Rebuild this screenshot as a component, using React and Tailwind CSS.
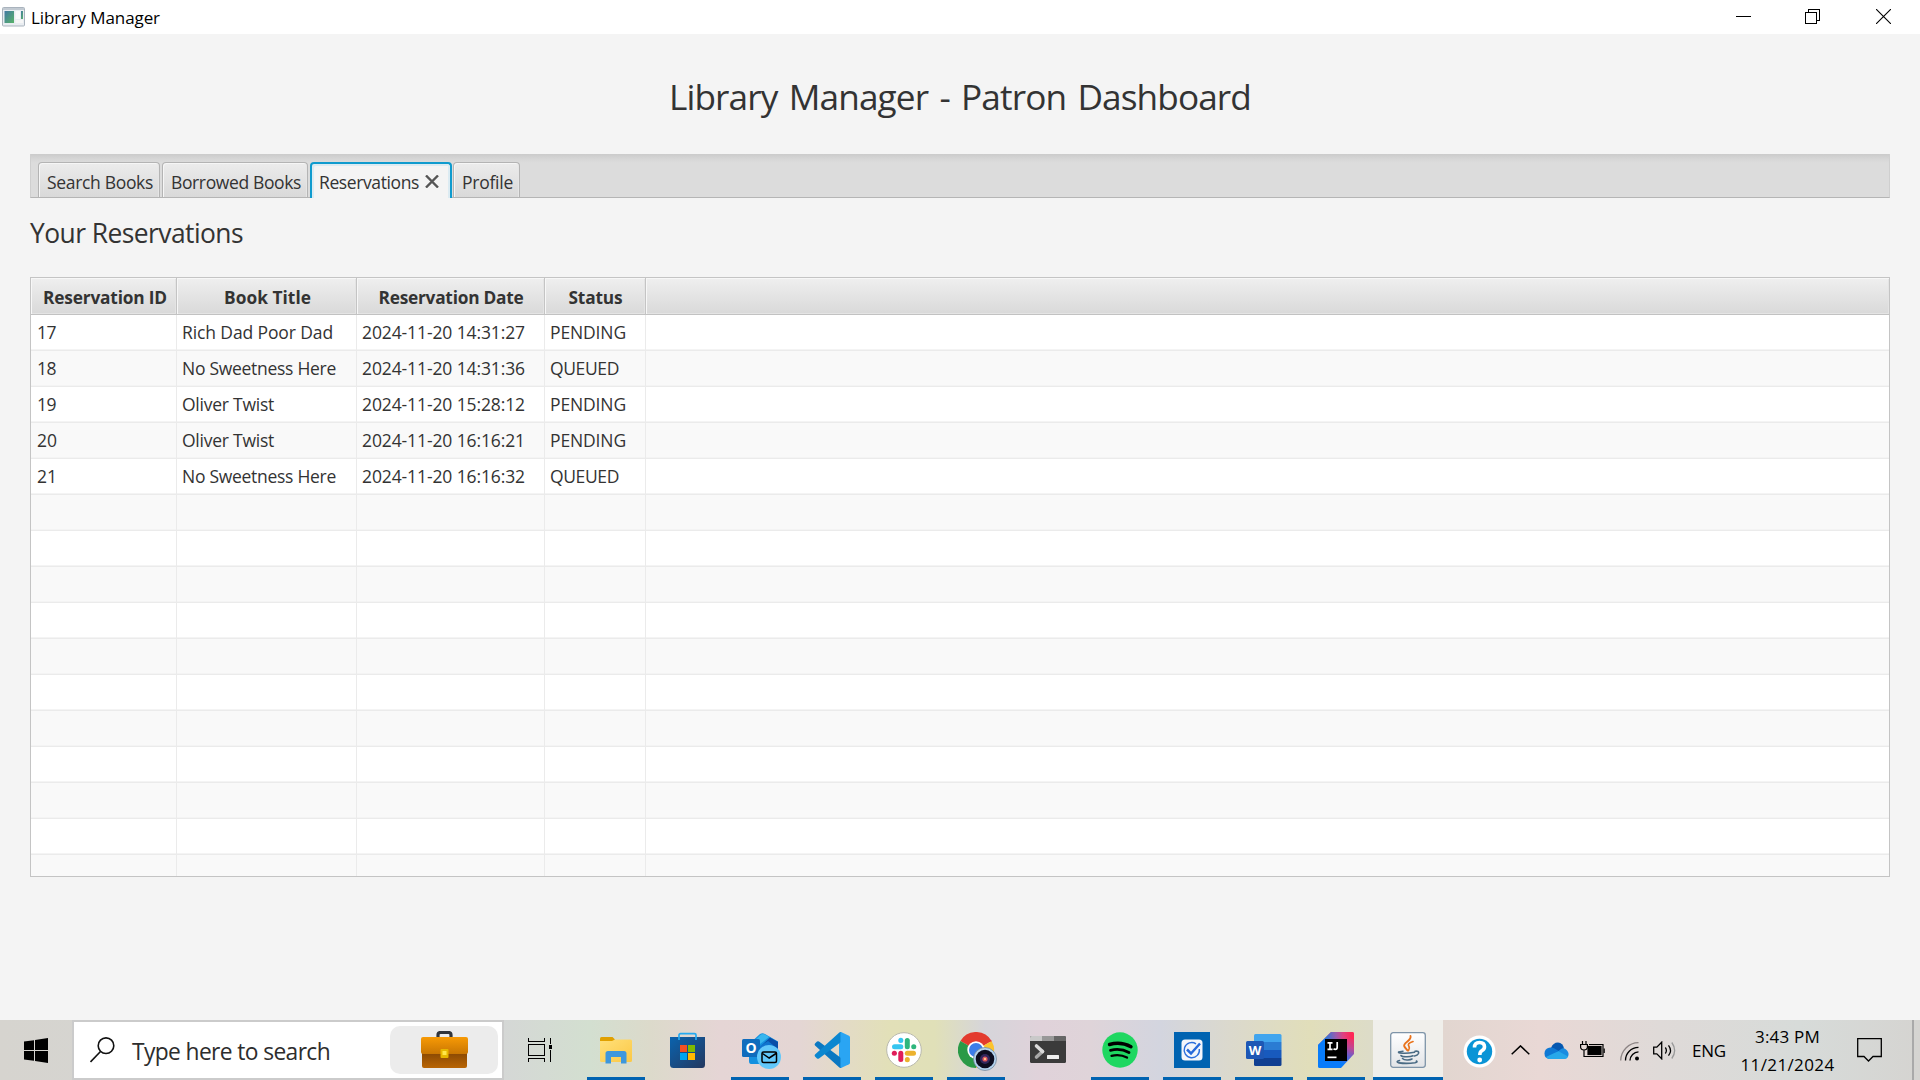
import React, { useLayoutEffect, useRef } from "react";

/* Single line of text whose tracking is adjusted so that it spans `w` pixels. */
function Fit({ w, className = "", children }) {
  const ref = useRef(null);
  useLayoutEffect(() => {
    const el = ref.current;
    el.style.letterSpacing = "0px";
    const natural = el.getBoundingClientRect().width;
    el.style.letterSpacing = `${(w - natural) / children.length}px`;
  }, [w, children]);
  return (
    <span ref={ref} className={`inline-block whitespace-pre ${className}`}>
      {children}
    </span>
  );
}

const reservations = [
  ["17", 19, "Rich Dad Poor Dad", 151, "2024-11-20 14:31:27", 163, "PENDING", 76],
  ["18", 19, "No Sweetness Here", 154, "2024-11-20 14:31:36", 163, "QUEUED", 69],
  ["19", 19, "Oliver Twist", 92, "2024-11-20 15:28:12", 163, "PENDING", 76],
  ["20", 20, "Oliver Twist", 92, "2024-11-20 16:16:21", 163, "PENDING", 76],
  ["21", 20, "No Sweetness Here", 154, "2024-11-20 16:16:32", 163, "QUEUED", 69],
];

const cols = "grid grid-cols-[146px_180px_188px_101px_1fr]";

function TitleBar() {
  return (
    <div className="flex h-[34px] items-center bg-white text-black">
      <svg className="ml-[2px] -mt-[1px] h-[20px] w-[23px]" viewBox="0 0 23 20">
        <defs>
          <linearGradient id="appA" x1="0" y1="0" x2="1" y2="1">
            <stop offset="0" stopColor="#4279a3" />
            <stop offset="1" stopColor="#58b368" />
          </linearGradient>
        </defs>
        <rect x="0.5" y="0.5" width="22" height="18.5" rx="1" fill="#e9edf1" stroke="#a9b3bd" />
        <rect x="1" y="1" width="21" height="2" fill="#c2cad2" />
        <rect x="2.5" y="4" width="9.5" height="12" fill="url(#appA)" />
        <rect x="13.5" y="4" width="4.5" height="8" fill="#fafafa" />
        <rect x="19" y="4" width="2" height="8" fill="url(#appA)" />
        <rect x="13.5" y="13" width="7.5" height="3" fill="#f6f6f6" />
      </svg>
      <Fit w={129} className="ml-[6px] pt-[2px] text-[17px] leading-[34px]">Library Manager</Fit>
      <div className="-mt-[1px] ml-auto flex items-center pr-[29px]">
        <svg className="h-[15px] w-[15px]" viewBox="0 0 15 15" shapeRendering="crispEdges">
          <rect y="7" width="15" height="1" />
        </svg>
        <svg className="ml-[54px] h-[15px] w-[15px]" viewBox="0 0 15 15" fill="none" stroke="#000" shapeRendering="crispEdges">
          <path d="M0.5 3.5h11v11h-11z M3.5 3V.5h11v11H12" />
        </svg>
        <svg className="ml-[56px] h-[15px] w-[15px]" viewBox="0 0 15 15" fill="none" stroke="#000" strokeWidth="1.1">
          <path d="M0 0L15 15M15 0L0 15" />
        </svg>
      </div>
    </div>
  );
}

function Tab({ label, w, className, active }) {
  const look = active
    ? "border-2 border-b-0 border-[#0f9bce] bg-[#f4f4f4] shadow-[inset_2px_2px_0_#dcebf2,inset_-2px_0_0_#dcebf2] h-[36px]"
    : "border border-b-0 border-[#b4b4b4] bg-linear-to-b from-[#ececec] to-[#d9d9d9] shadow-[inset_1px_1px_0_#f6f6f6,inset_-1px_0_0_#e6e6e6] h-[35px] pt-[3px]";
  return (
    <div className={`flex items-center rounded-t-[4px] ${look} ${className}`}>
      <Fit w={w} className="text-[17.5px] leading-[36px]">{label}</Fit>
      {active && (
        <svg className="-mt-[1px] ml-[6px] h-[13px] w-[14px]" viewBox="0 0 14 13" fill="none" stroke="#555" strokeWidth="2.4">
          <path d="M1 0.5L13 12.5M13 0.5L1 12.5" />
        </svg>
      )}
    </div>
  );
}

function Tabs() {
  return (
    <div className="flex h-[44px] items-start border-b border-x border-b-[#b5b5b5] border-x-[#cfcfcf] bg-[linear-gradient(#cbcbcb,#d6d6d6_5px,#dcdcdc_9px,#dcdcdc)] pt-[8px] pl-[7px]">
      <Tab label="Search Books" w={106} className="w-[122px] pl-[8px]" />
      <Tab label="Borrowed Books" w={130} className="ml-[2px] w-[146px] pl-[8px]" />
      <Tab label="Reservations" w={100} className="ml-[2px] w-[142px] pl-[7px] pt-[1px]" active />
      <Tab label="Profile" w={51} className="ml-[1px] w-[67px] pl-[8px]" />
    </div>
  );
}

function HeaderCell({ children, w, className = "" }) {
  return (
    <div className={`flex items-center justify-center border-r border-b border-r-[#c4c4c4] border-b-[#c2c2c2] bg-linear-to-b from-[#efefef] to-[#d9d9d9] pt-[3px] text-[17.3px] font-bold shadow-[inset_1px_1px_0_#f7f7f7,inset_-1px_-1px_0_#e4e4e4] ${className}`}>
      {children && <Fit w={w}>{children}</Fit>}
    </div>
  );
}

function Table() {
  return (
    <div className="flex h-[600px] flex-col overflow-hidden border border-[#c4c4c4]">
      <div className={`${cols} h-[37px] shrink-0`}>
        <HeaderCell w={124} className="pl-[3px]">Reservation ID</HeaderCell>
        <HeaderCell w={87} className="pl-[2px]">Book Title</HeaderCell>
        <HeaderCell w={145} className="pl-[1px]">Reservation Date</HeaderCell>
        <HeaderCell w={54} className="pl-[1px]">Status</HeaderCell>
        <HeaderCell className="border-r-0" />
      </div>
      {Array.from({ length: 16 }, (_, i) => {
        const r = reservations[i];
        const cells = r ? [[r[0], r[1]], [r[2], r[3]], [r[4], r[5]], [r[6], r[7]], null] : [null, null, null, null, null];
        return (
          <div key={i} className={`${cols} h-[36px] shrink-0 border-b border-[#ebebeb] shadow-[inset_0_-1px_0_#f4f4f4] ${i % 2 ? "bg-[#f9f9f9]" : "bg-white"}`}>
            {cells.map((c, j) => (
              <div key={j} className={`${j ? "pl-[5px]" : "pl-[6px]"} ${j < 4 ? "border-r border-[#ebebeb]" : ""}`}>
                {c && <Fit w={c[1]} className="text-[17.5px] leading-[34px]">{c[0]}</Fit>}
              </div>
            ))}
          </div>
        );
      })}
    </div>
  );
}

function Explorer() {
  return (
    <svg className="h-[36px] w-[36px]" viewBox="0 0 36 36">
      <defs>
        <linearGradient id="fold" x1="0" y1="0" x2="1" y2="1">
          <stop offset="0" stopColor="#ffe07a" /><stop offset="1" stopColor="#fbc846" />
        </linearGradient>
      </defs>
      <path d="M2 6.5Q2 5 3.500 5H14.500L17 7.500V12H2Z" fill="#e0a000" />
      <path d="M2 9H14L17 7.500H32.500Q34 7.500 34 9V28.500Q34 30 32.500 30H3.500Q2 30 2 28.500Z" fill="url(#fold)" />
      <path d="M7.500 31.500V21.500Q7.500 19 10 19H26Q28.500 19 28.500 21.500V31.500H23V25H13V31.500Z" fill="#3e97dc" />
    </svg>
  );
}

function Store() {
  return (
    <svg className="h-[36px] w-[36px]" viewBox="0 0 36 36">
      <defs>
        <linearGradient id="store" x1="0" y1="0" x2="1" y2="1">
          <stop offset="0" stopColor="#0a63ae" /><stop offset="1" stopColor="#24385f" />
        </linearGradient>
      </defs>
      <path d="M0 5H35V32.500Q35 36 32 36H3.500Q0 36 0 32.500Z" fill="url(#store)" />
      <path d="M9 8V3Q9 1.700 10.500 1.700H24.500Q26 1.700 26 3V8" fill="none" stroke="#25aaf0" strokeWidth="1.700" />
      <path d="M10 13H17V20H10Z" fill="#f25022" />
      <path d="M18 13H25V20H18Z" fill="#7fba00" />
      <path d="M10 21H17V28H10Z" fill="#00a4ef" />
      <path d="M18 21H25V28H18Z" fill="#ffb900" />
    </svg>
  );
}

function Outlook() {
  return (
    <svg className="ml-[3px] mt-[3px] h-[39px] w-[39px]" viewBox="0 0 39 39">
      <path d="M7 12L18 2Q20.500 .5 23 2L36 9.500V26L30 32H9Q7 32 7 29Z" fill="#1490df" />
      <path d="M12 9L19 2.500Q21 1.500 23 2.500L27 5L18 12Z" fill="#38b6ee" />
      <path d="M20 13L28 5.500L36 10V17L29 19Z" fill="#0a4fa8" />
      <path d="M18 14L26 9L36 17V27H18Z" fill="#0f74cf" />
      <rect x="0" y="7" width="18" height="18" rx="1.500" fill="#0f6cbd" />
      <text x="9" y="21" textAnchor="middle" fontFamily="Open Sans" fontWeight="700" fontSize="14" fill="#fff">O</text>
      <circle cx="27" cy="25" r="12" fill="#62c8fa" />
      <rect x="20" y="20" width="14.500" height="10.500" rx="1.500" fill="none" stroke="#000" strokeWidth="1.500" />
      <path d="M20.500 21.500L27.200 26L34 21.500" fill="none" stroke="#000" strokeWidth="1.500" />
    </svg>
  );
}

function VSCode() {
  return (
    <svg className="h-[36px] w-[36px]" viewBox="0 0 36 36">
      <path d="M27 0L35 3.800Q36 4.300 36 5.300V30.700Q36 31.700 35 32.200L27 36L25 34V2Z" fill="#2aa5f3" />
      <path d="M27 36Q25.500 36 24.800 35L1 13.500Q.2 12.500 1 11.500L3 9.600Q4 9 5 9.600L27 26Z" fill="#0a78c2" />
      <path d="M27 0Q25.500 0 24.800 1L1 22.500Q.2 23.500 1 24.500L3 26.400Q4 27 5 26.400L27 10Z" fill="#0b87d0" />
      <path d="M27 0L28 2V34L27 36L26.500 35V1Z" fill="#2aa5f3" />
    </svg>
  );
}

function Slack() {
  return (
    <svg className="h-[36px] w-[36px]" viewBox="0 0 36 36">
      <circle cx="18" cy="18" r="17.300" fill="#fff" stroke="#b9b9ae" strokeWidth="1" />
      <g strokeWidth="5" strokeLinecap="round">
        <path d="M8.500 14.700H14.800" stroke="#36c5f0" /><path d="M14.800 8.300V8.400" stroke="#36c5f0" />
        <path d="M21.300 8.500V14.800" stroke="#2eb67d" /><path d="M27.700 14.700H27.800" stroke="#2eb67d" />
        <path d="M27.500 21.300H21.300" stroke="#ecb22e" /><path d="M21.300 27.600V27.700" stroke="#ecb22e" />
        <path d="M14.800 27.500V21.300" stroke="#e01e5a" /><path d="M8.300 21.300H8.400" stroke="#e01e5a" />
      </g>
    </svg>
  );
}

function Chrome() {
  return (
    <svg className="ml-[3px] mt-[3px] h-[39px] w-[39px]" viewBox="0 0 39 39">
      <path d="M18 18L2.400 9A18 18 0 0 1 33.600 9Z" fill="#e33b2e" />
      <path d="M18 18L33.600 9A18 18 0 0 1 18 36Z" fill="#fcc32c" />
      <path d="M18 18L18 36A18 18 0 0 1 2.400 9Z" fill="#2a9a47" />
      <path d="M18 9.500H33.800L33 8H18Z" fill="#e33b2e" />
      <circle cx="18" cy="18" r="8.700" fill="#fff" />
      <circle cx="18" cy="18" r="7" fill="#3b7de9" />
      <circle cx="27" cy="27" r="11.500" fill="#b4d3ee" stroke="#6f7f91" strokeWidth="0.700" />
      <circle cx="27" cy="27" r="9.300" fill="#0d0d20" />
      <circle cx="27" cy="27" r="5" fill="#32265c" />
      <circle cx="27" cy="27" r="2.600" fill="#d9535b" />
      <circle cx="27" cy="27" r="1.200" fill="#ffc58a" />
    </svg>
  );
}

function Terminal() {
  return (
    <svg className="h-[36px] w-[36px]" viewBox="0 0 36 36">
      <rect y="4" width="36" height="27" rx="1.500" fill="#3b3b3b" />
      <path d="M0 9V5.500Q0 4 1.500 4H12V9Z" fill="#c9c9c9" />
      <path d="M12 4H24V9H12Z" fill="#989898" />
      <path d="M24 4H34.500Q36 4 36 5.500V9H24Z" fill="#666" />
      <path d="M12.500 19.500L6.500 25" fill="none" stroke="#a8a8a8" strokeWidth="3.600" strokeLinecap="round" />
      <path d="M6.500 14L12.500 19.500" fill="none" stroke="#dadada" strokeWidth="3.600" strokeLinecap="round" />
      <rect x="17" y="23" width="12" height="4" rx="0.500" fill="#efefef" />
    </svg>
  );
}

function Spotify() {
  return (
    <svg className="h-[36px] w-[36px]" viewBox="0 0 36 36" fill="none" stroke="#000" strokeLinecap="round">
      <circle cx="18" cy="18" r="17.700" fill="#1fd761" stroke="none" />
      <path d="M7.500 12.500Q19 9.300 29 14.800" strokeWidth="3.400" />
      <path d="M8.500 18.300Q18.500 15.800 27 20.500" strokeWidth="2.800" />
      <path d="M9.500 23.800Q18 21.700 25 25.600" strokeWidth="2.300" />
    </svg>
  );
}

function Todo() {
  return (
    <svg className="h-[36px] w-[36px]" viewBox="0 0 36 36">
      <rect width="36" height="36" fill="#0063b1" />
      <rect x="7.500" y="7.500" width="21" height="21" rx="3.500" fill="#f4f6fb" />
      <path d="M22 11.800A7.600 7.600 0 1 0 25.300 17" fill="none" stroke="#2d6fdc" strokeWidth="1.400" />
      <path d="M13 17.500L17 21.500L26 11.500" fill="none" stroke="#2769da" strokeWidth="2.500" />
    </svg>
  );
}

function Word() {
  return (
    <svg className="h-[36px] w-[36px]" viewBox="0 0 36 36">
      <path d="M8 10V3.500Q8 2 9.500 2H34Q35.500 2 35.500 3.500V10Z" fill="#41a5ee" />
      <path d="M8 10H35.500V18H8Z" fill="#2b7cd3" />
      <path d="M8 18H35.500V26H8Z" fill="#185abd" />
      <path d="M8 26H35.500V32.500Q35.500 34 34 34H9.500Q8 34 8 32.500Z" fill="#103f91" />
      <rect x="0" y="9" width="18" height="18" rx="1.500" fill="#1d57b5" />
      <text x="9" y="22.700" textAnchor="middle" fontFamily="Open Sans" fontWeight="700" fontSize="13" fill="#fff">W</text>
    </svg>
  );
}

function IntelliJ() {
  return (
    <svg className="h-[36px] w-[36px]" viewBox="0 0 36 36">
      <defs>
        <linearGradient id="ij" gradientUnits="userSpaceOnUse" x1="8" y1="5" x2="33" y2="2">
          <stop offset="0" stopColor="#2f78d8" /><stop offset="0.400" stopColor="#9a5cae" />
          <stop offset="0.700" stopColor="#e04080" /><stop offset="1" stopColor="#fe2857" />
        </linearGradient>
        <linearGradient id="ij2" gradientUnits="userSpaceOnUse" x1="22" y1="34" x2="34" y2="4">
          <stop offset="0.100" stopColor="#087cfa" /><stop offset="0.350" stopColor="#5c62d4" />
          <stop offset="0.650" stopColor="#c04592" /><stop offset="1" stopColor="#fe2857" />
        </linearGradient>
      </defs>
      <path d="M13 0H34Q36 0 36 2V22L23 36H2Q0 36 0 34V13Z" fill="url(#ij2)" />
      <path d="M13 0H34Q36 0 36 2V7H7V6Z" fill="url(#ij)" />
      <path d="M0 13L7 6V36H2Q0 36 0 34Z" fill="#087cfa" />
      <rect x="7" y="7" width="22" height="22" fill="#000" />
      <path d="M9.500 10.800H14.500M9.500 17.300H14.500M12 10.800V17.300M19.200 10V15.300Q19.200 17.400 17.300 17.400Q16.300 17.400 15.600 16.600" fill="none" stroke="#fff" strokeWidth="1.700" />
      <rect x="9.500" y="24.500" width="9" height="1.700" fill="#fff" />
    </svg>
  );
}

function Java() {
  return (
    <svg className="h-[36px] w-[36px]" viewBox="0 0 36 36" fill="none" strokeLinecap="round">
      <defs>
        <linearGradient id="jv" x1="0" y1="0" x2="0" y2="1">
          <stop offset="0" stopColor="#ffffff" /><stop offset="1" stopColor="#e2e4e7" />
        </linearGradient>
      </defs>
      <rect x="0.700" y="0.700" width="34.600" height="34.600" rx="2.500" fill="url(#jv)" stroke="#7e94a8" strokeWidth="1.300" />
      <path d="M20.500 4C22 8.500 13 10.500 14.200 14C15 15.800 16.500 17 17.500 18.500" stroke="#e9731c" strokeWidth="1.900" />
      <path d="M23 9.500C18.500 11 17.500 12.500 19 14.500Q20 16.500 18.500 18.500" stroke="#e9731c" strokeWidth="1.700" />
      <g stroke="#4a6b84" strokeWidth="1.600">
        <path d="M13 19.200Q6 20 10 21Q16 21.900 24.500 20.300" />
        <path d="M11 23.500Q12 25 17 24.800Q21 24.700 23 23.800" />
        <path d="M12.500 26.500Q14 28.300 18 28Q20.500 27.800 22 27" />
        <path d="M25 19.300Q29.500 18.600 28.500 21.500Q27.500 23.500 24.500 24" />
        <path d="M9.500 28.600Q5 29.800 9 30.900Q17 32 25 30.700Q28 29.900 26.500 29" />
      </g>
    </svg>
  );
}

const apps = [
  [Explorer, true], [Store, false], [Outlook, true], [VSCode, true], [Slack, true], [Chrome, true],
  [Terminal, false], [Spotify, true], [Todo, true], [Word, true], [IntelliJ, true],
];

function SearchBox() {
  return (
    <div className="flex h-[60px] w-[432px] items-center border-2 border-[#cbcbcb] bg-white">
      <svg className="ml-[16px] h-[26px] w-[25px]" viewBox="0 0 25 26" fill="none" stroke="#111" strokeWidth="1.600">
        <circle cx="16" cy="8.700" r="7.800" /><path d="M10.500 14.500L0.500 25" />
      </svg>
      <Fit w={198} className="ml-[17px] pt-[3px] text-[22.800px] leading-[57px] text-[#2d2d2d]">Type here to search</Fit>
      <div className="ml-auto mr-[4px] flex h-[48px] w-[108px] justify-center rounded-[10px] bg-[#ececec]">
        <svg className="mt-[5px] h-[37px] w-[47px]" viewBox="0 0 47 37">
          <defs>
            <linearGradient id="bagTop" x1="0" y1="0" x2="0" y2="1"><stop offset="0" stopColor="#f79a05" /><stop offset="1" stopColor="#c97603" /></linearGradient>
            <linearGradient id="bagLow" x1="0" y1="0" x2="0" y2="1"><stop offset="0" stopColor="#844503" /><stop offset="1" stopColor="#b96504" /></linearGradient>
          </defs>
          <path d="M17 8V4Q17 1.500 19.500 1.500H27.500Q30 1.500 30 4V8" fill="none" stroke="#30343b" strokeWidth="3.200" />
          <path d="M1 20H46V35Q46 37 44 37H3Q1 37 1 35Z" fill="url(#bagLow)" />
          <path d="M0 8Q0 6 2 6H45Q47 6 47 8V21Q47 23 45 23H2Q0 23 0 21Z" fill="url(#bagTop)" />
          <rect x="19.500" y="18" width="8" height="9" rx="1" fill="#e8b800" />
          <rect x="21.500" y="20" width="4" height="4" fill="#ffe64a" />
        </svg>
      </div>
    </div>
  );
}

function Tray() {
  return (
    <div className="flex flex-1 items-center text-black">
      <svg className="ml-[20px] mt-[2px] h-[33px] w-[33px]" viewBox="0 0 33 33">
        <circle cx="16.500" cy="16.500" r="16" fill="#fff" /><circle cx="16.500" cy="16.500" r="12.700" fill="#0a94d6" />
        <path d="M11.500 12.500Q11.500 7.500 16.500 7.500Q21.500 7.500 21.500 11.800Q21.500 14.300 18.800 15.800Q16.800 17 16.800 20" fill="none" stroke="#fff" strokeWidth="3.600" />
        <circle cx="16.700" cy="25" r="2.400" fill="#fff" />
      </svg>
      <svg className="-mt-[1px] ml-[15px] h-[10px] w-[19px]" viewBox="0 0 19 10" fill="none" stroke="#000" strokeWidth="1.500"><path d="M0.700 9.300L9.500 0.900L18.300 9.300" /></svg>
      <svg className="ml-[14px] h-[17px] w-[25px]" viewBox="0 0 25 17">
        <path d="M7 6Q9 .5 14 .5Q19 1 20 6.500L12 12Z" fill="#0557b0" />
        <path d="M5 17Q.5 16 .5 11.500Q.5 7 5 5.700Q8 5 11 6.800L17 10.500L8 17Z" fill="#0f78d4" />
        <path d="M14.500 9L17 7Q19.500 5.500 22 7.500Q25 10 24.500 13Q24 16.500 20 17L12 13Z" fill="#1a8ce0" />
        <path d="M2 15Q8 12 14.500 9.300L24 14.500Q23 17 20 17H5Q3 16.700 2 15Z" fill="#28a8ea" />
      </svg>
      <svg className="-mt-[2px] ml-[11px] h-[17px] w-[25px]" viewBox="0 0 25 17" fill="none" stroke="#000" strokeWidth="1.200">
        <path d="M2.500 0V3.500M6 0V3.500M0.600 3.500H7.400V6.500Q7 9 4 9Q1 9 .6 6.500ZM4 9V15.500H23V3.500H9" /><rect x="8" y="5.500" width="13" height="8" fill="#000" /><path d="M24.200 7.500V12" />
      </svg>
      <svg className="ml-[15px] mt-[2px] h-[19px] w-[20px]" viewBox="0 0 20 19" fill="none" stroke="#000" strokeWidth="1.300">
        <path d="M0.700 18.500A18 18 0 0 1 18.500 0.700" stroke="#8d8585" /><path d="M5.500 18.500A13 13 0 0 1 18.500 5.300" /><path d="M10 18.500A9 9 0 0 1 18.500 9.800" /><circle cx="17" cy="16.500" r="2" fill="#000" stroke="none" />
      </svg>
      <svg className="ml-[13px] h-[19px] w-[23px]" viewBox="0 0 23 19" fill="none" stroke="#000" strokeWidth="1.300">
        <path d="M0.700 6.200H3.800L8.700 1.200V17.800L3.800 12.800H0.700Z" /><path d="M12.300 6.500Q14.500 9.500 12.300 12.500" /><path d="M15.500 4.300Q19.500 9.500 15.500 14.700" /><path d="M18.800 1.500Q24.500 9.500 18.800 17.500" stroke="#999" />
      </svg>
      <Fit w={34} className="ml-[16px] pt-[1px] text-[17px]">ENG</Fit>
      <div className="ml-[14px] flex w-[95px] flex-col items-center pt-[1px] text-[17px] leading-[28px]">
        <Fit w={65}>3:43 PM</Fit>
        <Fit w={94}>11/21/2024</Fit>
      </div>
      <svg className="ml-[22px] h-[24px] w-[25px]" viewBox="0 0 25 24" fill="none" stroke="#000" strokeWidth="1.300"><path d="M0.700 0.700H24.300V18.500H16L11.500 23L7 18.500H0.700Z" /></svg>
      <div className="ml-auto h-[60px] w-[8px] border-l-2 border-[#a9a9a9]" />
    </div>
  );
}

function Taskbar() {
  return (
    <div className="flex h-[60px] items-center bg-[linear-gradient(90deg,#d6d4cf_0px,#d5d7d6_500px,#d3dfd0_590px,#dcdacb_650px,#e5d5d5_720px,#e4d6d4_800px,#e2e0b8_890px,#e0e0b8_935px,#d6d5da_985px,#e0d2da_1040px,#dfd4d9_1090px,#d3d5df_1160px,#dbd9cd_1230px,#e1deba_1310px,#dddcc8_1370px,#e2d6d0_1445px,#e9d8d5_1540px,#dfdad8_1660px,#d7dbd9_1800px,#d5d4d1_1920px)]">
      <div className="flex w-[72px] justify-center">
        <svg className="h-[25px] w-[24px]" viewBox="0 0 24 25">
          <path d="M0 3.600L10 2.200V12H0ZM11 2L24 0V12H11ZM0 13H10V22.800L0 21.400ZM11 13H24V25L11 23Z" />
        </svg>
      </div>
      <SearchBox />
      <div className="flex w-[76px] justify-center">
        <svg className="-ml-[4px] -mt-[1px] h-[24px] w-[25px]" viewBox="0 0 25 24" fill="none" stroke="#000" strokeWidth="1.300" shapeRendering="crispEdges">
          <path d="M0.500 0V3.500H16.500V0M0.500 6.500H16.500V17.500H0.500ZM0.500 24V20.500H16.500V24M22.500 0V6M22.500 12V24" /><rect x="21.500" y="8" width="2" height="2" fill="#000" />
        </svg>
      </div>
      {apps.map(([Icon, open], i) => (
        <div key={i} className="flex h-[60px] w-[72px] items-center justify-center">
          <div className="relative flex h-[60px] w-[58px] items-center justify-center">
            <Icon />
            {open && <div className="absolute inset-x-0 bottom-0 h-[3px] bg-[#0063b1]" />}
          </div>
        </div>
      ))}
      <div className="ml-[1px] flex h-[60px] w-[70px] items-center justify-center border-b-3 border-[#0063b1] bg-[#f0efeb] pt-[3px]">
        <Java />
      </div>
      <Tray />
    </div>
  );
}

export default function App() {
  return (
    <div className="flex h-[1080px] w-[1920px] flex-col overflow-hidden bg-[#f4f4f4] font-['Open_Sans','Noto_Sans',sans-serif] text-[#333]">
      <TitleBar />
      <div className="flex flex-1 flex-col px-[30px]">
        <h1 className="flex h-[120px] items-center justify-center pt-[5px]">
          <Fit w={582} className="text-[35.200px] [word-spacing:3px]">Library Manager - Patron Dashboard</Fit>
        </h1>
        <Tabs />
        <h2 className="h-[79px] pt-[15px]">
          <Fit w={213} className="text-[26.400px] leading-[40px]">Your Reservations</Fit>
        </h2>
        <Table />
      </div>
      <Taskbar />
    </div>
  );
}
